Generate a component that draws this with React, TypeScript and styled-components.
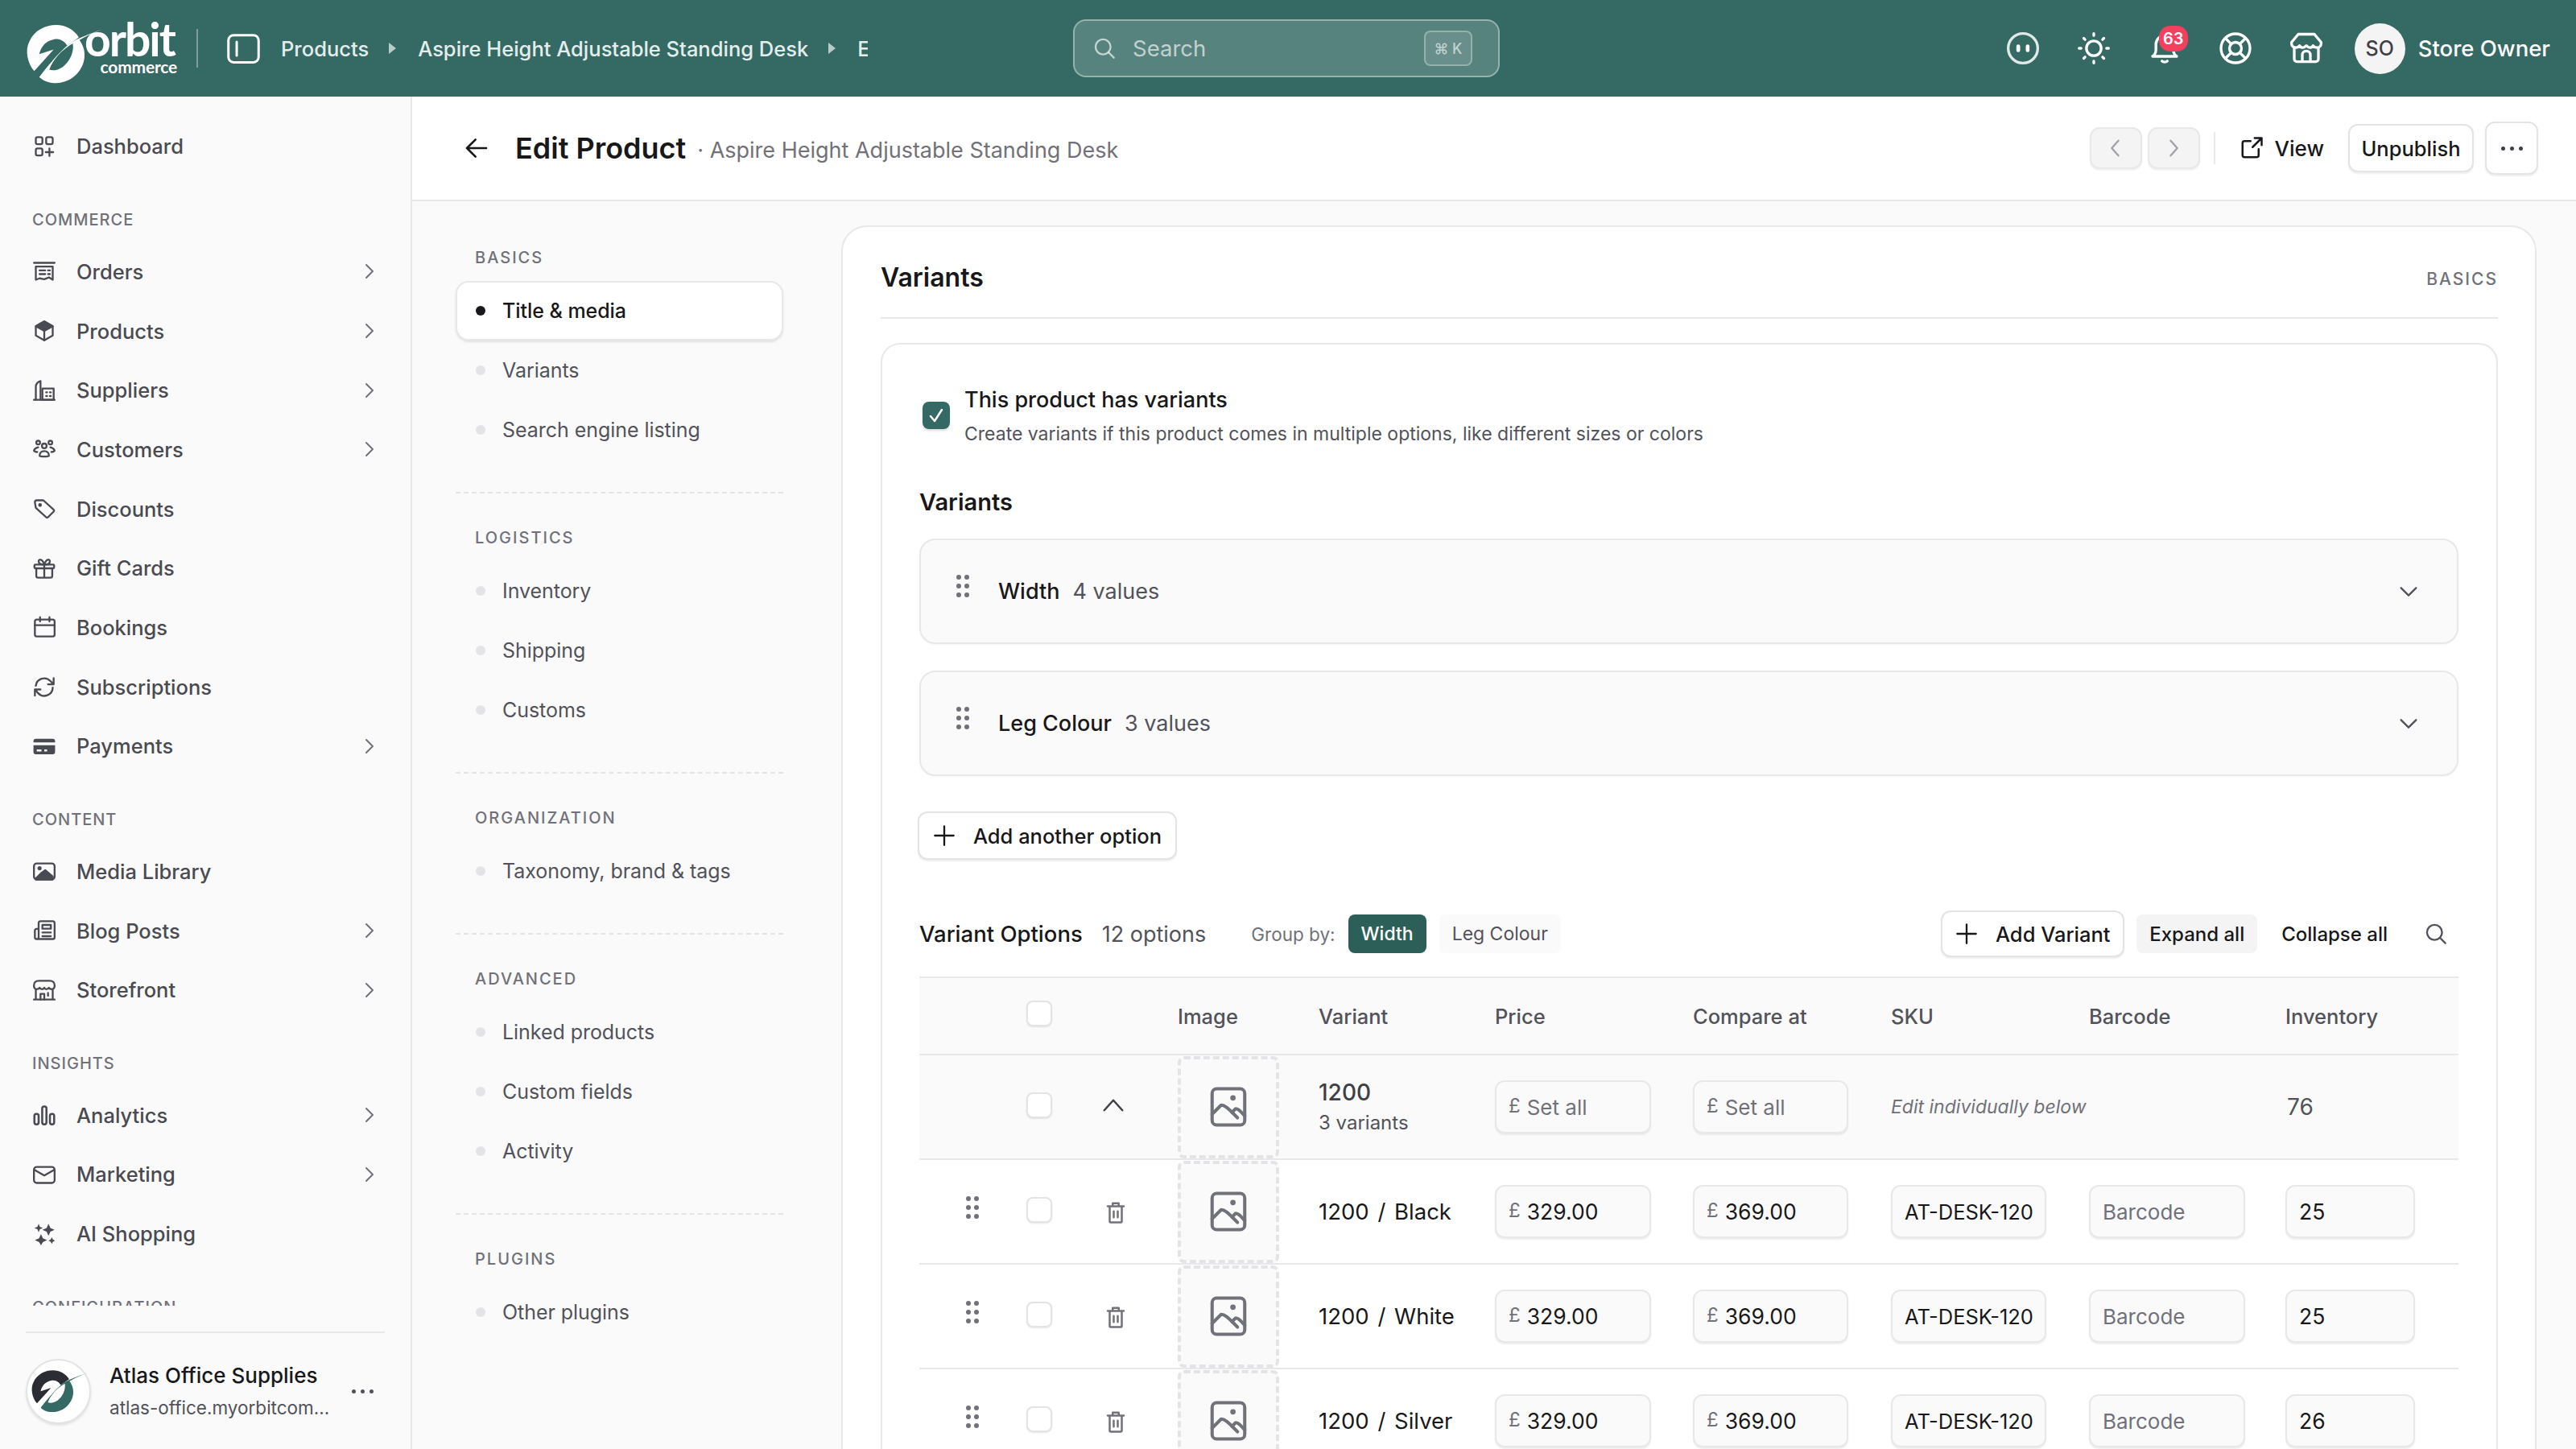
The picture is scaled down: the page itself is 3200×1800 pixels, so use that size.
import React from "react";
import styled, { createGlobalStyle } from "styled-components";

const Global = createGlobalStyle`
  html, body { margin: 0; padding: 0; width: 3200px; height: 1800px; overflow: hidden; background: #fff; }
  body { font-family: Inter, "Liberation Sans", sans-serif; color: #18181b; -webkit-font-smoothing: antialiased; }
  * { box-sizing: border-box; }
`;

/* ---------- icons ---------- */
type IconProps = { size?: number; color?: string; sw?: number; children?: React.ReactNode };
const Svg = ({ size = 28, color = "currentColor", sw = 2, children }: IconProps) => (
  <svg width={size} height={size} viewBox="0 0 24 24" fill="none" stroke={color} strokeWidth={sw} strokeLinecap="round" strokeLinejoin="round" style={{ flexShrink: 0, display: "block" }}>
    {children}
  </svg>
);
type I = { size?: number; color?: string; sw?: number };
const IDashboard = (p: I) => <Svg {...p}><rect x="3" y="2" width="7" height="7.500" rx="1.800" /><rect x="14" y="2" width="7" height="7.500" rx="1.800" /><rect x="3" y="14" width="7" height="7.500" rx="1.800" /><path d="M17.500 14v8M13.500 18h8" /></Svg>;
const IOrders = (p: I) => <Svg {...p}><path d="M1 3h22" /><path d="M3 7h18M3 7v14l4-1.500 5 1 5-2 4 2.500V7" /><path d="M7 11h6M7 15h6M16 11h2M16 15h2" /></Svg>;
const IBox = (p: I) => <Svg {...p}><path d="M12 2 3 7v10l9 5 9-5V7z" /><path d="M12 2 3 7l9 5 9-5z" fill="currentColor" /><path d="M12 12v10" /></Svg>;
const ISupplier = (p: I) => <Svg {...p}><path d="M1 22h22" /><path d="M3 22V8c0-3 2-5 5-6v20" /><rect x="10" y="10" width="12" height="12" /><path d="M14 14h1M18 14h1M14 18h1M18 18h1" /></Svg>;
const ICustomers = (p: I) => <Svg {...p}><circle cx="12" cy="8.500" r="2.500" /><circle cx="5.500" cy="5" r="2" /><circle cx="18.500" cy="5" r="2" /><path d="M7 19c0-3 2-5 5-5s5 2 5 5c0 1-10 1-10 0z" /><path d="M5.500 10C3 10.500 1.500 12 1 13.500c.5 1 2 1.500 3.500 1.500M18.500 10c2.500.5 4 2 4.500 3.500-.5 1-2 1.500-3.500 1.500" /></Svg>;
const ITag = (p: I) => <Svg {...p}><path d="M2 5a2 2 0 0 1 2-2h7l11 10a1.500 1.500 0 0 1 0 2l-6 6a1.500 1.500 0 0 1-2 0L3 11z" /><circle cx="7.500" cy="8" r="1" fill="currentColor" /></Svg>;
const IGift = (p: I) => <Svg {...p}><rect x="1.500" y="8" width="21" height="4" rx="1" /><path d="M3.500 12v8a2 2 0 0 0 2 2h13a2 2 0 0 0 2-2v-8M12 8v14" /><path d="M12 8C9 8 6 7 6 4.500S10 1.500 12 8zM12 8c3 0 6-1 6-3.500S14 1.500 12 8z" /></Svg>;
const ICal = (p: I) => <Svg {...p}><rect x="2" y="4" width="21" height="18" rx="2" /><path d="M2 10h21M7.500 1.500V6M17.500 1.500V6" /></Svg>;
const ISync = (p: I) => <Svg {...p}><path d="M3 11a9 9 0 0 1 15.500-5L22 9.500M22 3v6.500h-6" /><path d="M21 13a9 9 0 0 1-15.500 6L2 15M2 21.500V15h6" /></Svg>;
const ICard = (p: I) => <Svg {...p} sw={0}><path fillRule="evenodd" fill="currentColor" stroke="none" d="M3 4h18a2.500 2.500 0 0 1 2.500 2.500V8H.5V6.500A2.500 2.500 0 0 1 3 4zM.5 11h23v7a2.500 2.500 0 0 1-2.500 2.500H3A2.500 2.500 0 0 1 .5 18zM4 15.500V17.500h5V15.500zM12 15.500V17.500h3V15.500z" /></Svg>;
const IMedia = (p: I) => <Svg {...p}><rect x="1" y="4" width="22" height="17" rx="3" /><path d="M3 20l6-6 4-3 8 7v3H3z" fill="currentColor" /><circle cx="7" cy="9" r="1.200" fill="currentColor" /></Svg>;
const IBlog = (p: I) => <Svg {...p}><path d="M5 21h16a2 2 0 0 0 2-2V4a2 2 0 0 0-2-2H8a2 2 0 0 0-2 2v15a2 2 0 0 1-4 0v-7c0-1 1-2 3-2" /><rect x="10" y="6" width="9" height="4" /><path d="M10 14h9M10 18h9" /></Svg>;
const IStore = (p: I) => <Svg {...p}><path d="M1 22h22M3 12v10M21 12v10" /><path d="M6 2h12c3 0 5 2 5 5v1c0 1.500-1.200 3-3 3-1.500 0-2.500-.6-3-1.500C16.500 10.500 15 11 14 11s-1.500-.5-2-1.500C11.500 10.500 11 11 10 11S7.500 10.500 7 9.500C6.500 10.500 5.500 11 4 11c-1.800 0-3-1.500-3-3V7c0-3 2-5 5-5z" /><path d="M8 22v-6h4v6M16 15v3" /></Svg>;
const IBars = (p: I) => <Svg {...p} sw={2.200}><rect x="1.500" y="11" width="4.500" height="11" rx="2" /><rect x="9.800" y="3" width="4.500" height="19" rx="2" /><rect x="18" y="11" width="4.500" height="11" rx="2" /></Svg>;
const IMail = (p: I) => <Svg {...p}><rect x="1" y="4" width="22" height="17" rx="3" /><path d="M1.500 7l10.500 6 10.500-6" /></Svg>;
const ISpark = (p: I) => <Svg {...p} sw={0}><g fill="currentColor" stroke="none"><path d="M6 1l1.300 3.200L10.500 5.500 7.300 6.800 6 10 4.700 6.800 1.500 5.500 4.700 4.200zM16.500 1l2 4.500L23 7.500l-4.500 2-2 4.500-2-4.500-4.500-2 4.500-2zM8.500 12l2 4.500 4.500 2-4.500 2-2 3.500-2-3.500-4.500-2 4.500-2zM20 15.500l1.200 2.300 2.300 1.200-2.300 1.200L20 22.500l-1.200-2.300-2.300-1.200 2.300-1.200z" /></g></Svg>;
const IChevR = (p: I) => <Svg {...p}><path d="M9 4l8 8-8 8" /></Svg>;
const IChevD = (p: I) => <Svg {...p}><path d="M4 8l8 8 8-8" /></Svg>;
const IChevU = (p: I) => <Svg {...p}><path d="M3 17 12 7l9 10" /></Svg>;
const ICL = (p: I) => <Svg {...p}><path d="M15 4l-7 8 7 8" /></Svg>;
const ICR = (p: I) => <Svg {...p}><path d="M9 4l7 8-7 8" /></Svg>;
const IPlus = (p: I) => <Svg {...p}><path d="M12 2v20M2 12h20" /></Svg>;
const ISearch = (p: I) => <Svg {...p}><circle cx="10.500" cy="10.500" r="8" /><path d="M16.500 16.500 22 22" /></Svg>;
const IArrow = (p: I) => <Svg {...p}><path d="M21 12H3M11 4l-8 8 8 8" /></Svg>;
const ITrash = (p: I) => <Svg {...p}><path d="M4 6h16M9 6V3h6v3M6 6v15a1 1 0 0 0 1 1h10a1 1 0 0 0 1-1V6M10 11v6M14 11v6" /></Svg>;
const IImage = (p: I) => <Svg {...p}><rect x="3" y="2" width="18" height="20" rx="2.500" /><circle cx="14.500" cy="7" r=".6" fill="currentColor" /><path d="M3 16l5-5c2 0 4 2 6 4l2-2c2 0 3 2 5 4" /><path d="M14 15l3 3" /></Svg>;
const IExternal = (p: I) => <Svg {...p}><path d="M11 5H5a2 2 0 0 0-2 2v12a2 2 0 0 0 2 2h12a2 2 0 0 0 2-2v-6" /><path d="M13 11l9-9M15 2h7v7" /></Svg>;
const IPanel = (p: I) => <Svg {...p}><rect x="2" y="3" width="20" height="18" rx="3.500" /><path d="M7.500 7.500v9" /></Svg>;
const IFace = (p: I) => <Svg {...p}><circle cx="12" cy="12" r="11" stroke="rgba(255,255,255,.85)" /><path d="M8.500 10.500v3M15.500 10.500v3" strokeWidth="2.800" /></Svg>;
const ISun = (p: I) => <Svg {...p}><circle cx="12" cy="12" r="5.500" /><path d="M12 1v1.500M12 21.500V23M1 12h1.500M21.500 12H23M4.500 4.500l1 1M18.500 18.500l1 1M19.500 4.500l-1 1M5.500 18.500l-1 1" /></Svg>;
const IBell = (p: I) => <Svg {...p}><path d="M3 18c1.500-1 2.500-2.500 2.500-5V9a6.500 6.500 0 0 1 13 0v4c0 2.500 1 4 2.500 5z" /><path d="M10 21.500c1 1 3 1 4 0" /></Svg>;
const ILife = (p: I) => <Svg {...p}><circle cx="12" cy="12" r="10.800" /><circle cx="12" cy="12" r="4.500" /><path d="M4.500 4.500l4 4M19.500 4.500l-4 4M4.500 19.500l4-4M19.500 19.500l-4-4" /></Svg>;
const IShop = (p: I) => <Svg {...p}><path d="M6 1.500h12l5 6v1c0 1.500-1.200 3-3 3-1.500 0-2.500-.7-3-1.500-.5 1-1.700 1.500-2.500 1.500S13 11 12 10c-1 1-1.700 1.500-2.500 1.500S7.500 11 7 10c-.5.8-1.500 1.500-3 1.500-1.800 0-3-1.500-3-3v-1z" /><path d="M3 11.500V20a2 2 0 0 0 2 2h14a2 2 0 0 0 2-2v-8.500M9 22v-5a3 3 0 0 1 6 0v5" /></Svg>;

const Grip = styled.div`
  display: grid;
  grid-template-columns: repeat(2, 6px);
  gap: 5px 4px;
  & > i { width: 6px; height: 6px; border-radius: 50%; background: #71717a; display: block; }
`;
const DragDots = () => <Grip>{[0, 1, 2, 3, 4, 5].map((n) => <i key={n} />)}</Grip>;

const LogoMark = ({ a, b, size }: { a: string; b: string; size: number }) => (
  <svg width={size} height={size * 0.79} viewBox="90 80 240 185" style={{ display: "block", flexShrink: 0 }}>
    <path fill={a} d="M120 222C100 200 92 160 105 135C120 100 155 85 185 85C215 85 240 100 253 122L218 146C208 130 192 125 178 128C155 132 140 150 135 172L178 158L120 222Z" />
    <path fill={b} fillRule="evenodd" d="M325 97C290 110 250 125 232 136C205 155 170 195 135 240C150 255 170 258 185 258C235 258 272 215 270 172C270 155 262 140 255 130C280 115 305 105 325 97ZM165 218C175 190 200 160 235 140C240 165 225 195 205 210C190 220 175 222 165 218Z" />
  </svg>
);

/* ---------- top bar ---------- */
const Page = styled.div`
  width: 3200px; height: 1800px; display: flex; flex-direction: column; overflow: hidden;
`;
const TopBar = styled.header`
  height: 120px; flex-shrink: 0; background: #356a64; display: flex; align-items: center; padding: 0 32px 0 30px; color: #fff;
`;
const Logo = styled.div`
  display: flex; align-items: flex-start; width: 192px; height: 64px;
`;
const LogoWords = styled.div`
  display: flex; flex-direction: column; align-items: flex-end; margin-left: -25px; margin-top: -8px;
`;
const LogoName = styled.span`
  font-family: Lato, Inter, sans-serif; font-weight: 700; font-size: 57px; line-height: 56px; letter-spacing: -2px; color: #fff;
`;
const LogoSub = styled.span`
  font-family: Lato, Inter, sans-serif; font-weight: 700; font-size: 21px; line-height: 16px; letter-spacing: -.2px; color: #fff; margin-top: -1px; margin-right: -3px;
`;
const VRule = styled.div`
  width: 2px; height: 48px; background: rgba(255,255,255,.35); margin: 0 34px 0 22px; flex-shrink: 0;
`;
const Crumbs = styled.nav`
  display: flex; align-items: center; width: 729px; margin-left: 24px; overflow: hidden; white-space: nowrap; font-size: 25.500px; font-weight: 500; color: #e3eeec;
`;
const Tri = styled.span`
  flex-shrink: 0; width: 0; height: 0; border-left: 9px solid rgba(255,255,255,.65); border-top: 7px solid transparent; border-bottom: 7px solid transparent; margin: 0 27px 0 25px;
`;
const SearchBox = styled.div`
  width: 530px; height: 72px; margin-left: 255px; border-radius: 16px; flex-shrink: 0; background: rgba(255,255,255,.17); border: 2px solid rgba(255,255,255,.38);
  display: flex; align-items: center; padding: 0 36px 0 23px; gap: 21px; font-size: 27.500px; color: rgba(255,255,255,.65);
`;
const Kbd = styled.span`
  margin-left: auto; width: 60px; height: 44px; border: 2px solid rgba(255,255,255,.3); border-radius: 8px; background: rgba(255,255,255,.1);
  display: flex; align-items: center; justify-content: center; font-size: 18px; font-weight: 500; color: rgba(255,255,255,.6); margin-right: -4px;
`;
const TopRight = styled.div`
  margin-left: auto; display: flex; align-items: center;
`;
const TopIcon = styled.div`
  position: relative; width: 40px; height: 40px; margin-right: 48px; color: #fff;
`;
const Badge = styled.span`
  position: absolute; left: 13px; top: -8px; width: 36px; height: 32px; border-radius: 14px; background: #f43f5e; color: #fff;
  display: flex; align-items: center; justify-content: center; font-size: 20px; font-weight: 600;
`;
const Avatar = styled.div`
  width: 63px; height: 63px; border-radius: 50%; background: #f4f4f5; color: #3f3f46; display: flex; align-items: center; justify-content: center;
  font-size: 25px; font-weight: 500; margin-left: -8px; margin-right: 16px;
`;
const OwnerName = styled.span`
  font-size: 27.500px; font-weight: 500; color: #fff; white-space: nowrap;
`;

/* ---------- sidebar ---------- */
const Body = styled.div`
  flex: 1; display: flex; min-height: 0;
`;
const Sidebar = styled.aside`
  width: 512px; flex-shrink: 0; background: #fafafa; border-right: 2px solid #e8e8e8; display: flex; flex-direction: column; height: 1680px;
`;
const SideScroll = styled.div`
  height: 1502px; flex-shrink: 0; overflow: hidden; padding-top: 25px;
`;
const SideLabel = styled.div`
  height: 36px; line-height: 36px; margin: 36.800px 0 9px 40px; font-size: 20px; font-weight: 500; letter-spacing: 1px; color: #71717a;
`;
const SideRow = styled.div`
  height: 73.700px; display: flex; align-items: center; padding: 0 40px 0 40px; font-size: 25.500px; font-weight: 500; color: #4a4a52;
`;
const SideIconBox = styled.span`
  width: 30px; height: 30px; display: flex; align-items: center; justify-content: center; margin-right: 25px; flex-shrink: 0;
`;
const SideChev = styled.span`
  margin-left: auto; color: #71717a;
`;
const SideFoot = styled.div`
  flex: 1; margin: 32px 32px 0 32px; border-top: 2px solid #e8e8e8; display: flex; align-items: flex-start; padding-top: 32px; position: relative;
`;
const FootAvatar = styled.div`
  width: 81px; height: 81px; border-radius: 50%; background: #fff; border: 2px solid #e4e4e7; box-shadow: 0 2px 3px rgba(0,0,0,.1); display: flex; align-items: center; justify-content: center; flex-shrink: 0;
`;
const FootText = styled.div`
  margin-left: 23px; display: flex; flex-direction: column; gap: 8px; width: 301px; padding-top: 4px;
`;
const FootName = styled.span`
  font-size: 26px; font-weight: 500; line-height: 34px; color: #18181b; white-space: nowrap;
`;
const FootSub = styled.span`
  font-size: 22.500px; line-height: 30px; color: #52525b; white-space: nowrap;
`;
const Dots = styled.div<{ $c?: string }>`
  display: flex; gap: 6px; align-items: center;
  & > i { width: 5px; height: 5px; border-radius: 50%; background: ${(p) => p.$c || "#52525b"}; display: block; }
`;
const ThreeDots = ({ c }: { c?: string }) => <Dots $c={c}><i /><i /><i /></Dots>;
const FootDots = styled.div`
  padding-top: 38px;
`;

/* ---------- page header ---------- */
const Main = styled.main`
  flex: 1; min-width: 0; display: flex; flex-direction: column;
`;
const Head = styled.div`
  height: 130px; flex-shrink: 0; background: #fff; border-bottom: 2px solid #e8e8e8; display: flex; align-items: center; padding: 0 47px 0 64px; color: #18181b;
`;
const HeadTitle = styled.h1`
  margin: 0 0 0 32px; font-size: 36px; font-weight: 600; color: #18181b;
`;
const HeadSub = styled.span`
  margin-left: 14px; font-size: 27px; color: #71717a; position: relative; top: 2px; white-space: nowrap;
`;
const HeadRight = styled.div`
  margin-left: auto; display: flex; align-items: center;
`;
const PagerBtn = styled.div`
  width: 65px; height: 52px; border-radius: 12px; background: #f4f4f5; border: 2px solid #e8e8e8; box-shadow: 0 2px 2px rgba(0,0,0,.06); color: #a1a1aa;
  display: flex; align-items: center; justify-content: center; margin-right: 7px;
`;
const HeadRule = styled.div`
  width: 2px; height: 40px; background: #e8e8e8; margin: 0 30px 0 10px;
`;
const ViewLink = styled.div`
  display: flex; align-items: center; gap: 14px; font-size: 26px; font-weight: 500; margin-right: 30px;
`;
const WhiteBtn = styled.div<{ $w?: number; $h?: number }>`
  display: flex; align-items: center; justify-content: center; background: #fff; border: 2px solid #e4e4e7; border-radius: 12px; box-shadow: 0 2px 2px rgba(0,0,0,.07);
  width: ${(p) => p.$w}px; height: ${(p) => p.$h}px; font-size: 25.500px; font-weight: 500; color: #18181b; flex-shrink: 0; white-space: nowrap; gap: 22px;
`;
const HeadMore = styled(WhiteBtn)`
  margin-left: 14px;
`;

/* ---------- section nav ---------- */
const Content = styled.div`
  flex: 1; display: flex; background: #fafafa; min-height: 0; overflow: hidden;
`;
const SectionNav = styled.div`
  width: 533px; flex-shrink: 0; padding: 55px 72px 0 54px;
`;
const NavGroup = styled.div`
  & + & { margin-top: 40px; padding-top: 40px; border-top: 2px dashed #e4e4e7; }
`;
const NavLabel = styled.div`
  height: 30px; line-height: 30px; margin: 0 0 14px 24px; font-size: 20px; font-weight: 500; letter-spacing: 2px; color: #71717a;
`;
const NavItem = styled.div<{ $active?: boolean }>`
  height: 74px; display: flex; align-items: center; padding-left: 23px; gap: 21px; border-radius: 16px; font-size: 25px; letter-spacing: -.05px;
  font-weight: ${(p) => (p.$active ? 500 : 400)}; color: ${(p) => (p.$active ? "#18181b" : "#52525b")};
  background: ${(p) => (p.$active ? "#fff" : "transparent")};
  border: 2px solid ${(p) => (p.$active ? "#e8e8e8" : "transparent")};
  box-shadow: ${(p) => (p.$active ? "0 2px 3px rgba(0,0,0,.1)" : "none")};
  &::before { content: ""; width: 12px; height: 12px; border-radius: 50%; background: ${(p) => (p.$active ? "#18181b" : "#e4e4e7")}; flex-shrink: 0; }
`;

/* ---------- card ---------- */
const Card = styled.section`
  width: 2106px; height: 1700px; margin-top: 30px; background: #fff; border: 2px solid #e8e8e8; border-radius: 32px 32px 0 0; padding: 0 46px 0 47px; flex-shrink: 0;
`;
const CardHead = styled.div`
  height: 114px; border-bottom: 2px solid #e8e8e8; display: flex; align-items: center; justify-content: space-between; padding-top: 12px;
`;
const CardTitle = styled.h2`
  margin: 0; font-size: 32px; font-weight: 600; color: #18181b;
`;
const CardTag = styled.span`
  font-size: 21px; font-weight: 500; letter-spacing: 2px; color: #71717a; position: relative; top: 2px;
`;
const Inner = styled.div`
  margin-top: 30px; border: 2px solid #e8e8e8; border-radius: 24px; padding: 0 47px 0 46px; height: 1500px;
`;
const HasVariants = styled.div`
  display: flex; padding: 50px 0 0 4px; height: 176px; gap: 18px;
`;
const CheckOn = styled.div`
  width: 34px; height: 34px; margin-top: 21px; border-radius: 8px; background: #356a64; color: #fff; display: flex; align-items: center; justify-content: center; box-shadow: 0 2px 3px rgba(0,0,0,.15); flex-shrink: 0;
`;
const HasText = styled.div`
  display: flex; flex-direction: column;
`;
const HasTitle = styled.span`
  font-size: 27px; line-height: 34px; font-weight: 500; color: #18181b; margin-top: 2px;
`;
const HasDesc = styled.span`
  font-size: 23px; line-height: 30px; color: #52525b; margin-top: 10px;
`;
const SubTitle = styled.h3`
  margin: 0; height: 65px; font-size: 29px; line-height: 36px; font-weight: 600; color: #18181b; padding-top: 2px;
`;
const OptionBox = styled.div`
  height: 131px; margin-bottom: 33px; background: #fafafa; border: 2px solid #e8e8e8; border-radius: 20px; display: flex; align-items: center; padding: 0 46px 0 44px; box-shadow: 0 1px 2px rgba(0,0,0,.04);
`;
const OptionGrip = styled.div`
  margin-right: 36px; margin-top: -14px;
`;
const OptionName = styled.span`
  font-size: 27px; font-weight: 500; color: #18181b; margin-right: 16px;
`;
const OptionCount = styled.span`
  font-size: 27px; color: #52525b;
`;
const OptionChev = styled.span`
  margin-left: auto; color: #52525b;
`;
const AddBtn = styled(WhiteBtn)`
  margin-top: 44px; margin-left: -2px;
`;
const ToolRow = styled.div`
  margin-top: 62px; height: 60px; display: flex; align-items: center;
`;
const ToolTitle = styled.span`
  font-size: 27.500px; font-weight: 500; color: #18181b; white-space: nowrap;
`;
const ToolCount = styled.span`
  margin-left: 24px; font-size: 27px; color: #52525b; white-space: nowrap;
`;
const GroupLabel = styled.span`
  margin-left: 56px; font-size: 22.500px; color: #71717a; margin-right: 16px; white-space: nowrap;
`;
const Pill = styled.div<{ $on?: boolean }>`
  height: 48px; padding: 0 16px; border-radius: 8px; display: flex; align-items: center; font-size: 23px; font-weight: ${(p) => (p.$on ? 500 : 400)}; white-space: nowrap;
  background: ${(p) => (p.$on ? "#2c5f58" : "#fafafa")}; color: ${(p) => (p.$on ? "#fff" : "#52525b")};
`;
const PillGap = styled.div`
  width: 16px;
`;
const ToolRight = styled.div`
  margin-left: auto; display: flex; align-items: center;
`;
const ActionPill = styled.div<{ $fill?: boolean }>`
  height: 48px; padding: 0 16px; border-radius: 8px; display: flex; align-items: center; font-size: 24px; font-weight: 500; color: #18181b; white-space: nowrap;
  background: ${(p) => (p.$fill ? "#f4f4f5" : "transparent")}; margin-left: ${(p) => (p.$fill ? 15 : 14)}px;
`;
const ToolSearch = styled.span`
  color: #52525b; margin-left: 30px; margin-right: 14px;
`;

/* ---------- table ---------- */
const COLS = "133px 85px 103px 175px 219px 246px 246px 246px 244px 215px";
const TableHead = styled.div`
  margin-top: 23px; height: 98px; display: grid; grid-template-columns: ${COLS}; align-items: center; background: #fafafa; border-top: 2px solid #e8e8e8; border-bottom: 2px solid #e8e8e8; font-size: 25.500px; font-weight: 500; color: #52525b;
`;
const Row = styled.div<{ $group?: boolean }>`
  height: 130px; display: grid; grid-template-columns: ${COLS}; align-items: center; border-bottom: 2px solid #e8e8e8; background: ${(p) => (p.$group ? "#fafafa" : "#fff")};
`;
const Cell = styled.div`
  display: flex; align-items: center; min-width: 0;
`;
const Check = styled.div<{ $up?: number }>`
  width: 32px; height: 32px; border-radius: 8px; background: #fff; border: 2px solid #e4e4e7; box-shadow: 0 1px 2px rgba(0,0,0,.1); margin-top: ${(p) => -(p.$up ?? 4)}px;
`;
const HandleCell = styled(Cell)`
  padding-left: 58px; margin-top: -10px;
`;
const ActionCell = styled(Cell)<{ $pad: number }>`
  padding-left: ${(p) => p.$pad}px; color: #71717a; margin-top: ${(p) => (p.$pad === 8 ? -4 : 2)}px;
`;
const ImageBox = styled.div`
  width: 126px; height: 127px; background: #fafafa; border: 4px dashed #e4e4e7; border-radius: 8px; display: flex; align-items: center; justify-content: center; color: #71717a;
`;
const GroupCol = styled.div`
  display: flex; flex-direction: column; gap: 6px;
`;
const GroupName = styled.span`
  font-size: 28px; font-weight: 500; line-height: 34px; color: #3f3f46;
`;
const GroupSub = styled.span`
  font-size: 24px; line-height: 30px; color: #52525b;
`;
const VariantName = styled.span`
  font-size: 27.500px; line-height: 34px; color: #18181b; white-space: nowrap; word-spacing: 3px;
`;
const Field = styled.div<{ $w: number }>`
  width: ${(p) => p.$w}px; height: 66px; background: #fafafa; border: 2px solid #e8e8e8; border-radius: 12px; box-shadow: 0 2px 2px rgba(0,0,0,.07);
  display: flex; align-items: center; padding: 0 15px; font-size: 26.500px; color: #18181b; white-space: nowrap;
`;
const SkuText = styled.span`
  font-size: 25.500px;
`;
const Pound = styled.span`
  font-size: 24px; color: #71717a; margin-right: 8px; position: relative; top: -2px;
`;
const Placeholder = styled.span`
  color: #71717a; font-size: 26px;
`;
const Italic = styled.span`
  font-size: 23px; font-style: italic; color: #71717a; white-space: nowrap;
`;
const InvTotal = styled.span`
  font-size: 28px; color: #52525b; margin-left: 2px;
`;

/* ---------- data ---------- */
type Nav = { l: string; I: (p: I) => React.ReactElement; c?: boolean };
const sideGroups: { t: string; items: Nav[] }[] = [
  { t: "COMMERCE", items: [
    { l: "Orders", I: IOrders, c: true }, { l: "Products", I: IBox, c: true }, { l: "Suppliers", I: ISupplier, c: true },
    { l: "Customers", I: ICustomers, c: true }, { l: "Discounts", I: ITag }, { l: "Gift Cards", I: IGift },
    { l: "Bookings", I: ICal }, { l: "Subscriptions", I: ISync }, { l: "Payments", I: ICard, c: true },
  ] },
  { t: "CONTENT", items: [
    { l: "Media Library", I: IMedia }, { l: "Blog Posts", I: IBlog, c: true }, { l: "Storefront", I: IStore, c: true },
  ] },
  { t: "INSIGHTS", items: [
    { l: "Analytics", I: IBars, c: true }, { l: "Marketing", I: IMail, c: true }, { l: "AI Shopping", I: ISpark },
  ] },
  { t: "CONFIGURATION", items: [] },
];
const navGroups = [
  { t: "BASICS", items: ["Title & media", "Variants", "Search engine listing"] },
  { t: "LOGISTICS", items: ["Inventory", "Shipping", "Customs"] },
  { t: "ORGANIZATION", items: ["Taxonomy, brand & tags"] },
  { t: "ADVANCED", items: ["Linked products", "Custom fields", "Activity"] },
  { t: "PLUGINS", items: ["Other plugins"] },
];
const rows = [
  { n: "1200 / Black", q: "25" },
  { n: "1200 / White", q: "25" },
  { n: "1200 / Silver", q: "26" },
];

const SideItem = ({ l, I: Ic, c }: Nav) => (
  <SideRow>
    <SideIconBox><Ic size={28} /></SideIconBox>
    {l}
    {c && <SideChev><IChevR size={24} /></SideChev>}
  </SideRow>
);

export default function App() {
  return (
    <>
      <Global />
      <Page>
        <TopBar>
          <Logo>
            <LogoMark a="#fff" b="#fff" size={100} />
            <LogoWords>
              <LogoName>orbit</LogoName>
              <LogoSub>commerce</LogoSub>
            </LogoWords>
          </Logo>
          <VRule />
          <IPanel size={45} sw={1.600} />
          <Crumbs>
            Products<Tri />Aspire Height Adjustable Standing Desk<Tri />Edit Product
          </Crumbs>
          <SearchBox>
            <ISearch size={28} />
            Search
            <Kbd>⌘ K</Kbd>
          </SearchBox>
          <TopRight>
            <TopIcon><IFace size={40} /></TopIcon>
            <TopIcon><ISun size={40} /></TopIcon>
            <TopIcon><IBell size={40} /><Badge>63</Badge></TopIcon>
            <TopIcon><ILife size={40} /></TopIcon>
            <TopIcon><IShop size={40} /></TopIcon>
            <Avatar>SO</Avatar>
            <OwnerName>Store Owner</OwnerName>
          </TopRight>
        </TopBar>
        <Body>
          <Sidebar>
            <SideScroll>
              <SideItem l="Dashboard" I={IDashboard} />
              {sideGroups.map((g) => (
                <div key={g.t}>
                  <SideLabel>{g.t}</SideLabel>
                  {g.items.map((i) => <SideItem key={i.l} {...i} />)}
                </div>
              ))}
            </SideScroll>
            <SideFoot>
              <FootAvatar><LogoMark a="#2c2c34" b="#356a64" size={72} /></FootAvatar>
              <FootText>
                <FootName>Atlas Office Supplies</FootName>
                <FootSub>atlas-office.myorbitcom...</FootSub>
              </FootText>
              <FootDots><ThreeDots /></FootDots>
            </SideFoot>
          </Sidebar>
          <Main>
            <Head>
              <IArrow size={32} />
              <HeadTitle>Edit Product</HeadTitle>
              <HeadSub>· Aspire Height Adjustable Standing Desk</HeadSub>
              <HeadRight>
                <PagerBtn><ICL size={28} /></PagerBtn>
                <PagerBtn><ICR size={28} /></PagerBtn>
                <HeadRule />
                <ViewLink><IExternal size={30} />View</ViewLink>
                <WhiteBtn $w={156} $h={60}>Unpublish</WhiteBtn>
                <HeadMore $w={66} $h={66}><ThreeDots c="#3f3f46" /></HeadMore>
              </HeadRight>
            </Head>
            <Content>
              <SectionNav>
                {navGroups.map((g) => (
                  <NavGroup key={g.t}>
                    <NavLabel>{g.t}</NavLabel>
                    {g.items.map((t) => <NavItem key={t} $active={t === "Title & media"}>{t}</NavItem>)}
                  </NavGroup>
                ))}
              </SectionNav>
              <Card>
                <CardHead>
                  <CardTitle>Variants</CardTitle>
                  <CardTag>BASICS</CardTag>
                </CardHead>
                <Inner>
                  <HasVariants>
                    <CheckOn><Svg size={24} sw={2.500}><path d="M5 13l5 6L19 5" /></Svg></CheckOn>
                    <HasText>
                      <HasTitle>This product has variants</HasTitle>
                      <HasDesc>Create variants if this product comes in multiple options, like different sizes or colors</HasDesc>
                    </HasText>
                  </HasVariants>
                  <SubTitle>Variants</SubTitle>
                  <OptionBox>
                    <OptionGrip><DragDots /></OptionGrip>
                    <OptionName>Width</OptionName>
                    <OptionCount>4 values</OptionCount>
                    <OptionChev><IChevD size={28} /></OptionChev>
                  </OptionBox>
                  <OptionBox>
                    <OptionGrip><DragDots /></OptionGrip>
                    <OptionName>Leg Colour</OptionName>
                    <OptionCount>3 values</OptionCount>
                    <OptionChev><IChevD size={28} /></OptionChev>
                  </OptionBox>
                  <AddBtn $w={322} $h={60}><IPlus size={28} />Add another option</AddBtn>
                  <ToolRow>
                    <ToolTitle>Variant Options</ToolTitle>
                    <ToolCount>12 options</ToolCount>
                    <GroupLabel>Group by:</GroupLabel>
                    <Pill $on>Width</Pill>
                    <PillGap />
                    <Pill>Leg Colour</Pill>
                    <ToolRight>
                      <WhiteBtn $w={228} $h={58}><IPlus size={28} />Add Variant</WhiteBtn>
                      <ActionPill $fill>Expand all</ActionPill>
                      <ActionPill>Collapse all</ActionPill>
                      <ToolSearch><ISearch size={28} /></ToolSearch>
                    </ToolRight>
                  </ToolRow>
                  <TableHead>
                    <Cell />
                    <Cell><Check $up={6} /></Cell>
                    <Cell />
                    <Cell>Image</Cell>
                    <Cell>Variant</Cell>
                    <Cell>Price</Cell>
                    <Cell>Compare at</Cell>
                    <Cell>SKU</Cell>
                    <Cell>Barcode</Cell>
                    <Cell>Inventory</Cell>
                  </TableHead>
                  <Row $group>
                    <Cell />
                    <Cell><Check /></Cell>
                    <ActionCell $pad={8}><IChevU size={30} color="#3f3f46" /></ActionCell>
                    <Cell><ImageBox><IImage size={54} sw={1.800} /></ImageBox></Cell>
                    <Cell><GroupCol><GroupName>1200</GroupName><GroupSub>3 variants</GroupSub></GroupCol></Cell>
                    <Cell><Field $w={194}><Pound>£</Pound><Placeholder>Set all</Placeholder></Field></Cell>
                    <Cell><Field $w={193}><Pound>£</Pound><Placeholder>Set all</Placeholder></Field></Cell>
                    <Cell><Italic>Edit individually below</Italic></Cell>
                    <Cell />
                    <Cell><InvTotal>76</InvTotal></Cell>
                  </Row>
                  {rows.map((r) => (
                    <Row key={r.n}>
                      <HandleCell><DragDots /></HandleCell>
                      <Cell><Check /></Cell>
                      <ActionCell $pad={11}><ITrash size={30} /></ActionCell>
                      <Cell><ImageBox><IImage size={54} sw={1.800} /></ImageBox></Cell>
                      <Cell><VariantName>{r.n}</VariantName></Cell>
                      <Cell><Field $w={194}><Pound>£</Pound>329.00</Field></Cell>
                      <Cell><Field $w={193}><Pound>£</Pound>369.00</Field></Cell>
                      <Cell><Field $w={193}><SkuText>AT-DESK-120</SkuText></Field></Cell>
                      <Cell><Field $w={194}><Placeholder>Barcode</Placeholder></Field></Cell>
                      <Cell><Field $w={161}>{r.q}</Field></Cell>
                    </Row>
                  ))}
                </Inner>
              </Card>
            </Content>
          </Main>
        </Body>
      </Page>
    </>
  );
}
